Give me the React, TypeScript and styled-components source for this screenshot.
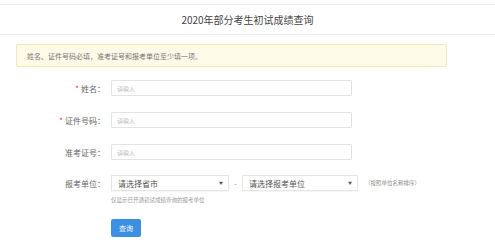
import styled, { createGlobalStyle } from 'styled-components';

const GlobalStyle = createGlobalStyle`
  html, body {
    margin: 0;
    padding: 0;
    background: #fff;
    font-family: "Microsoft YaHei", "Noto Sans CJK SC", "Liberation Sans", sans-serif;
  }
`;

const Header = styled.div`
  margin-top: 4px;
  height: 29px;
  border-top: 1px solid #eeeeee;
  border-bottom: 1px solid #eeeeee;
  display: flex;
  align-items: center;
  justify-content: center;
  font-size: 10px;
  color: #444;
`;

const Alert = styled.div`
  margin: 9px 0 0 16px;
  height: 21px;
  border: 1px solid #f5e8bd;
  border-radius: 2px;
  background: #fefae8;
  display: flex;
  align-items: center;
  padding-left: 10px;
  width: 419px;
  font-size: 7px;
  color: #777;
`;

const Form = styled.div`
  margin-top: 13px;
  display: flex;
  flex-direction: column;
`;

const Row = styled.div<{ $gap?: number }>`
  display: flex;
  align-items: center;
  height: 16px;
  margin-bottom: ${(p) => (p.$gap ?? 16)}px;
`;

const Label = styled.div`
  width: 105px;
  margin-right: 6px;
  text-align: right;
  font-size: 8px;
  color: #666;
  white-space: nowrap;
`;

const Star = styled.span`
  color: #ed4014;
  margin-right: 2px;
`;

const Input = styled.div`
  height: 14px;
  border: 1px solid #e3e3e3;
  border-radius: 1px;
  display: flex;
  align-items: center;
  padding-left: 5px;
  width: 234px;
  font-size: 6px;
  color: #bbb;
`;

const Select = styled.div<{ $w: number }>`
  width: ${(p) => p.$w - 13}px;
  height: 14px;
  border: 1px solid #e6e6e6;
  box-shadow: 0 1px 1px rgba(0, 0, 0, 0.04);
  display: flex;
  align-items: center;
  justify-content: space-between;
  padding: 0 5px 0 6px;
  font-size: 8px;
  color: #555;
`;

const Arrow = styled.span`
  font-size: 4px;
  color: #555;
`;

const Dash = styled.span`
  width: 13px;
  text-align: center;
  font-size: 7px;
  color: #888;
`;

const Note = styled.span`
  margin-left: 7px;
  font-size: 5.5px;
  color: #888;
`;

const Helper = styled.div`
  margin-left: 111px;
  height: 10px;
  line-height: 10px;
  font-size: 5.5px;
  color: #999;
  margin-bottom: 14px;
`;

const Button = styled.button`
  margin-left: 111px;
  width: 30px;
  height: 18px;
  border: 0;
  border-radius: 2px;
  background: #3b8fe5;
  color: #fff;
  font-size: 7px;
  padding: 0;
  font-family: inherit;
  cursor: pointer;
`;

export default function App() {
  return (
    <>
      <GlobalStyle />
      <Header>2020年部分考生初试成绩查询</Header>
      <Alert>姓名、证件号码必填，准考证号和报考单位至少填一项。</Alert>
      <Form>
        <Row>
          <Label><Star>*</Star>姓名：</Label>
          <Input>请输入</Input>
        </Row>
        <Row>
          <Label><Star>*</Star>证件号码：</Label>
          <Input>请输入</Input>
        </Row>
        <Row $gap={15}>
          <Label>准考证号：</Label>
          <Input>请输入</Input>
        </Row>
        <Row $gap={4}>
          <Label>报考单位：</Label>
          <Select $w={118}>请选择省市<Arrow>▼</Arrow></Select>
          <Dash>-</Dash>
          <Select $w={116}>请选择报考单位<Arrow>▼</Arrow></Select>
          <Note>（按照单位名称排序）</Note>
        </Row>
        <Helper>仅显示已开通初试成绩查询的报考单位</Helper>
        <Button>查询</Button>
      </Form>
    </>
  );
}
